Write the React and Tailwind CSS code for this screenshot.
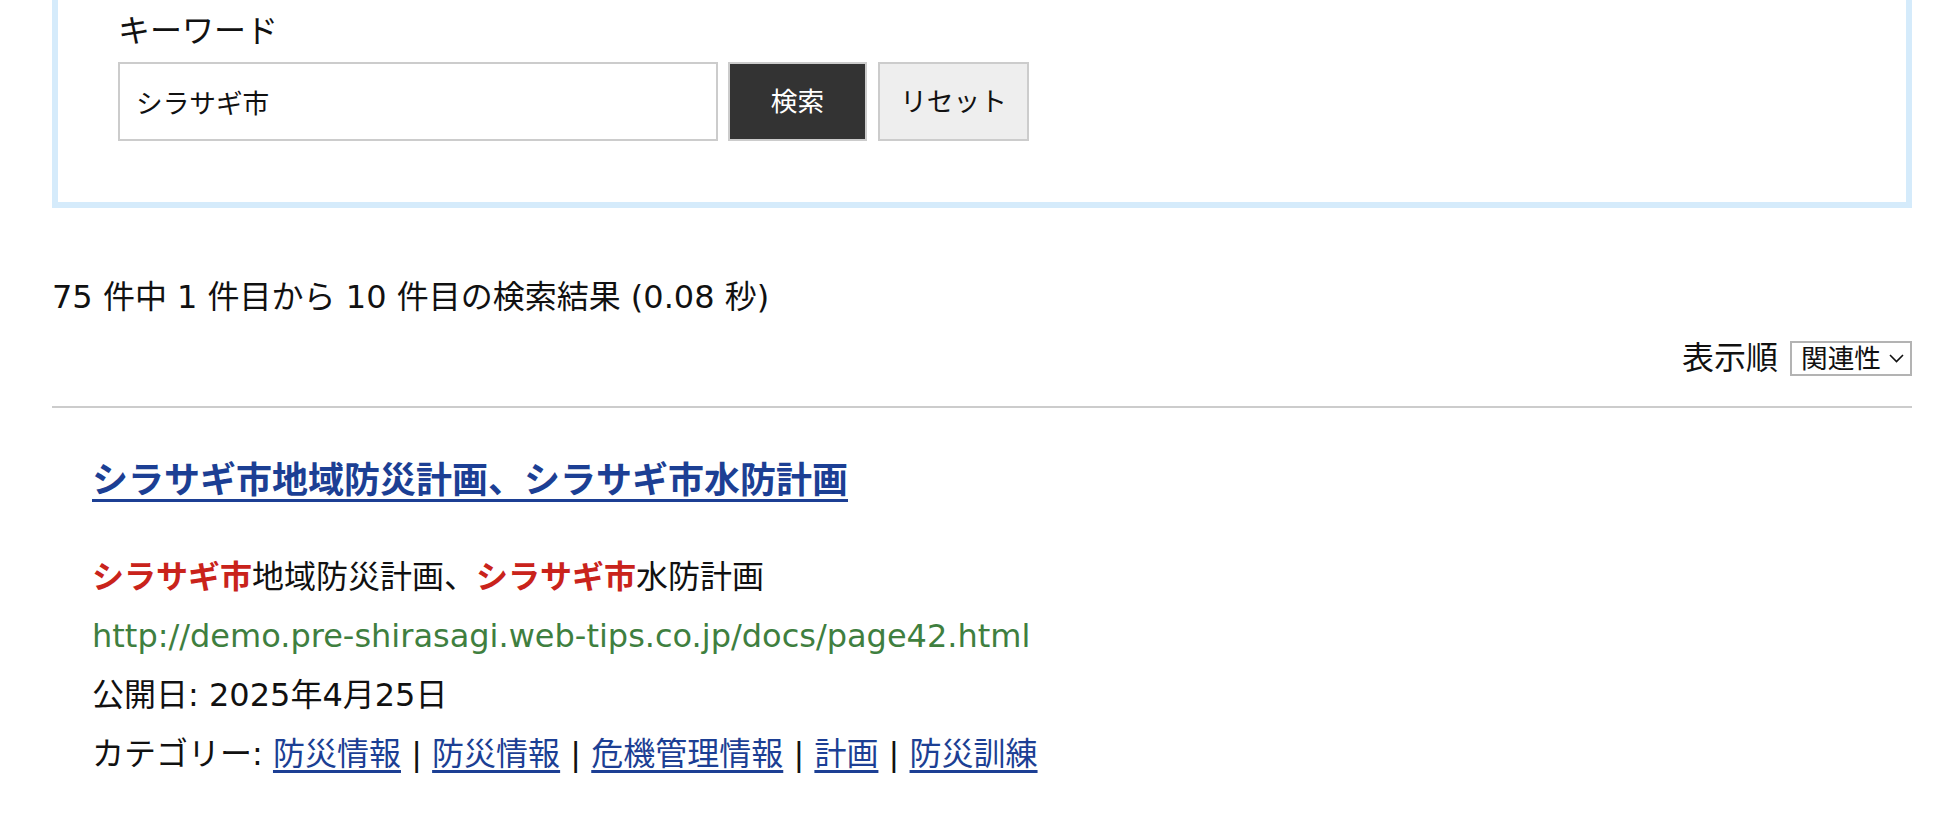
import { useState } from "react";

export default function App() {
  const [keyword, setKeyword] = useState("シラサギ市");
  const [sort, setSort] = useState("relevance");

  const categories = ["防災情報", "防災情報", "危機管理情報", "計画", "防災訓練"];

  return (
    <div className="min-h-[822px] bg-white text-[#111] font-['DejaVu_Sans','Noto_Sans_CJK_JP',sans-serif]">
      <div className="ml-[52px] w-[1860px]">
        {/* 検索フォーム */}
        <div className="border-[6px] border-t-0 border-[#d5ebfb] pt-[7px] px-[60px] pb-[61px]">
          <div className="text-[32px] leading-[48px]">キーワード</div>
          <div className="mt-[7px] flex h-[79px]">
            <input
              type="text"
              value={keyword}
              onChange={(e) => setKeyword(e.target.value)}
              className="w-[600px] h-full border-2 border-[#cccccc] px-[16px] text-[26.67px] text-[#111] outline-none"
            />
            <button className="ml-[10px] w-[139px] h-full bg-[#333333] border-2 border-[#cccccc] text-white text-[26.67px]">
              検索
            </button>
            <button className="ml-[11px] w-[151px] h-full bg-[#eeeeee] border-2 border-[#cccccc] text-[#111] text-[26.67px]">
              リセット
            </button>
          </div>
        </div>

        {/* 件数 */}
        <div className="mt-[65px] text-[32px] leading-[48px]">
          75 件中 1 件目から 10 件目の検索結果 (0.08 秒)
        </div>

        {/* 表示順 */}
        <div className="mt-[19px] flex h-[36px] items-center justify-end">
          <span className="text-[32px] leading-[36px]">表示順</span>
          <div className="relative ml-[12px] h-[35px] w-[122px]">
            <select
              value={sort}
              onChange={(e) => setSort(e.target.value)}
              className="appearance-none h-full w-full border-2 border-[#b3b3b3] bg-white pl-[9px] text-[26.67px] leading-[31px] text-[#111] outline-none"
            >
              <option value="relevance">関連性</option>
              <option value="date">新着順</option>
            </select>
            <svg
              className="pointer-events-none absolute right-[8px] top-[13px]"
              width="15"
              height="9"
              viewBox="0 0 15 9"
              fill="none"
            >
              <path d="M1 1l6.5 6.5L14 1" stroke="#111" strokeWidth="1.6" />
            </svg>
          </div>
        </div>

        <div className="mt-[30px] h-[2px] bg-[#cccccc]" />

        {/* 検索結果 */}
        <div className="pl-[40px]">
          <h2 className="mt-[46px] text-[36px] leading-[54px] font-bold">
            <a
              href="#"
              className="text-[#1c3f94] underline decoration-[3px] underline-offset-[6px]"
            >
              シラサギ市地域防災計画、シラサギ市水防計画
            </a>
          </h2>
          <div className="mt-[40px] text-[32px] leading-[59px]">
            <div>
              <span className="font-bold text-[#c9231b]">シラサギ市</span>
              地域防災計画、
              <span className="font-bold text-[#c9231b]">シラサギ市</span>
              水防計画
            </div>
            <div className="text-[#3f7f3f]">http://demo.pre-shirasagi.web-tips.co.jp/docs/page42.html</div>
            <div>公開日: 2025年4月25日</div>
            <div>
              カテゴリー:{" "}
              {categories.map((c, i) => (
                <span key={i}>
                  {i > 0 && " | "}
                  <a href="#" className="text-[#1c3f94] underline underline-offset-[5px]">
                    {c}
                  </a>
                </span>
              ))}
            </div>
          </div>
        </div>
      </div>
    </div>
  );
}
